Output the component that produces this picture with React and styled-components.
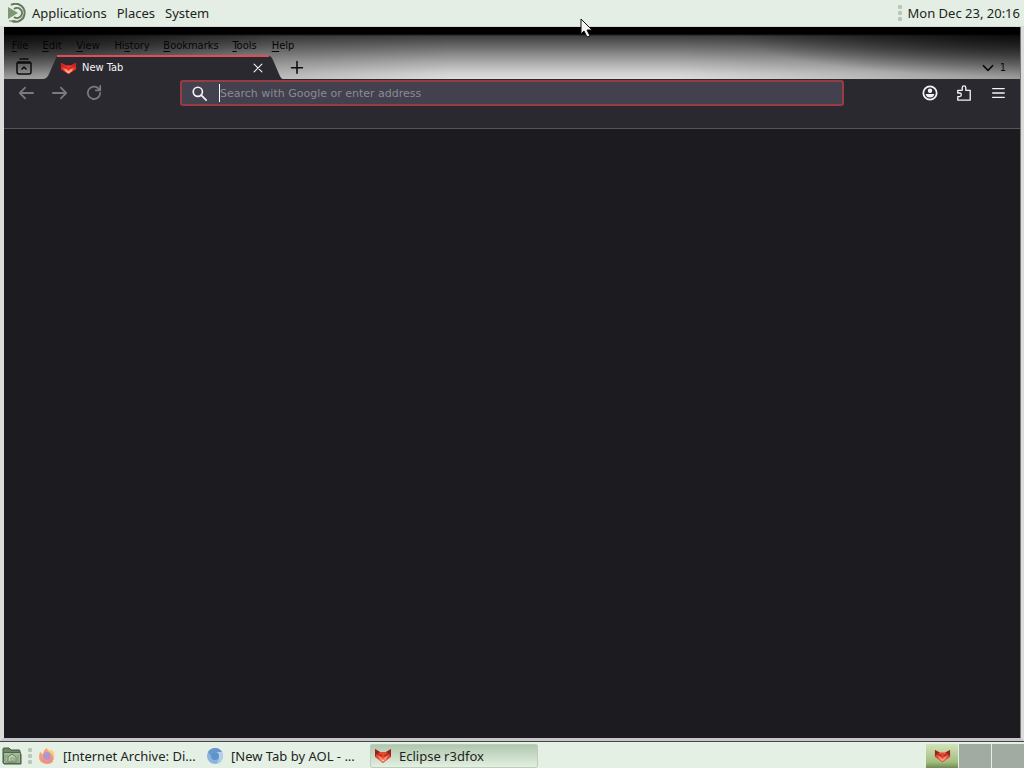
import React from "react";
import styled, { createGlobalStyle } from "styled-components";

const GlobalStyle = createGlobalStyle`
  *, *::before, *::after { box-sizing: border-box; }
  body { margin: 0; background: #e4eee4; overflow: hidden; }
  button, input { font: inherit; color: inherit; margin: 0; }
  svg { display: block; flex: none; }
`;

const Desktop = styled.div`
  display: flex;
  flex-direction: column;
  height: 100vh;
  font-family: "Noto Sans", sans-serif;
  font-size: 13px;
  line-height: 18px;
  color: #1c241c;
`;

const PlainButton = styled.button`
  display: flex;
  align-items: center;
  border: 0;
  padding: 0;
  background: none;
  white-space: nowrap;
`;

const TopPanel = styled.header`
  display: flex;
  flex: none;
  align-items: center;
  height: 27px;
  padding: 0 4px 0 8px;
  background: #e4eee4;
  border-bottom: 1px solid #d3dbd3;
`;

const PanelMenu = styled.nav`
  display: flex;
  flex: 1;
  gap: 10px;
`;

const PanelButton = styled(PlainButton)`
  gap: 4px;
`;

const Grip = styled.span`
  display: flex;
  flex: none;
  flex-direction: column;
  gap: 2px;
  width: 4px;
  margin: ${(p) => p.$margin};
  &::before, &::after, i {
    content: "";
    height: 4px;
    background: #b7c8ba;
    border-radius: 1px;
  }
  i { display: block; }
`;

const WindowFrame = styled.main`
  display: flex;
  flex: 1;
  min-height: 0;
  border: solid #dcdcda;
  border-width: 0 3px 3px 4px;
  border-bottom-color: #c6c6c8;
`;

const Browser = styled.section`
  display: flex;
  flex: 1;
  flex-direction: column;
  min-width: 0;
  background: #1c1b20;
  border-right: 1px solid #77777a;
  font-family: "DejaVu Sans Condensed", "DejaVu Sans", sans-serif;
  font-size: 11px;
  line-height: 14px;
`;

const Titlebar = styled.div`
  display: flex;
  flex: none;
  flex-direction: column;
  height: 52px;
  padding-top: 10px;
  background:
    radial-gradient(ellipse 280px 44px at 0 6px, rgba(0, 0, 0, 0.75), rgba(0, 0, 0, 0.4) 50%, transparent),
    radial-gradient(ellipse 280px 44px at 100% 6px, rgba(0, 0, 0, 0.75), rgba(0, 0, 0, 0.4) 50%, transparent),
    linear-gradient(90deg, rgba(0, 0, 0, 0.3), rgba(0, 0, 0, 0.16) 25%, transparent 44%, transparent 66%, rgba(0, 0, 0, 0.12) 82%, rgba(0, 0, 0, 0.3)),
    linear-gradient(#000 0, #000 7px, #404040 9px, #747474 22px, #a6a6a6 34px, #d2d0d1 46px, #dedcdd);
`;

const MenuBar = styled.nav`
  display: flex;
  flex: none;
  height: 18px;
  color: #050505;
`;

const MenuItem = styled(PlainButton)`
  justify-content: center;
  width: ${(p) => p.$width}px;
  u { text-underline-offset: 2px; }
`;

const TabStrip = styled.div`
  display: flex;
  flex: 1;
  align-items: stretch;
  color: #0c0c0e;
`;

const StripButton = styled(PlainButton)`
  justify-content: center;
  width: ${(p) => p.$width}px;
`;

const ListTabs = styled(PlainButton)`
  gap: 5px;
  margin-left: auto;
  padding: 2px 14px 0 0;
`;

const Tab = styled.div`
  display: flex;
  align-items: center;
  position: relative;
  width: 240px;
  padding: 2px 20px 0 17px;
  color: #f4f4f6;
`;

const TabShape = styled.svg`
  position: absolute;
  inset: 0;
  width: 100%;
  height: 100%;
`;

const TabLabel = styled.span`
  position: relative;
  flex: 1;
  margin-left: 5px;
`;

const TabIcon = styled.span`
  position: relative;
`;

const CloseButton = styled(PlainButton)`
  position: relative;
`;

const Toolbar = styled.div`
  display: flex;
  flex: none;
  align-items: flex-start;
  height: 28px;
  padding: 1px 14px 0;
  background: #2a2930;
`;

const ToolGroup = styled.div`
  display: flex;
  flex: 1;
  align-items: center;
  gap: 18px;
  height: 26px;
  justify-content: ${(p) => (p.$end ? "flex-end" : "flex-start")};
  color: ${(p) => (p.$end ? "#f4f3f8" : "#7a797f")};
`;

const AddressBar = styled.form`
  display: flex;
  align-items: center;
  width: 67.2%;
  height: 26px;
  padding: 0 10px;
  gap: 12px;
  color: #f4f3f8;
  background: #42414d;
  border: 2px solid #963c42;
  border-radius: 3px;
`;

const AddressInput = styled.input`
  flex: 1;
  min-width: 0;
  height: 18px;
  padding: 0;
  border: 0;
  border-left: 1px solid #fff;
  outline: 0;
  background: none;
  font-family: "DejaVu Sans", sans-serif;
  font-size: 11px;
  &::placeholder { color: #8c8a97; opacity: 1; }
`;

const BookmarkBar = styled.div`
  flex: none;
  height: 22px;
  background: #2a2930;
  border-bottom: 1px solid #56555b;
`;

const Taskbar = styled.footer`
  display: flex;
  flex: none;
  align-items: stretch;
  height: 27px;
  padding: 2px 0 0 2px;
  background: #e5f0e5;
  border-top: 1px solid #434746;
`;

const TaskList = styled.div`
  display: flex;
  flex: 1;
  min-width: 0;
`;

const Task = styled(PlainButton)`
  width: 168px;
  height: 24px;
  padding: 0 4px;
  gap: 7px;
  border-radius: 3px;
  background: ${(p) => (p.$active ? "linear-gradient(#aec5ac, #c7d9c5 45%, #e6f1e3)" : "none")};
  box-shadow: ${(p) => (p.$active ? "inset 0 0 0 1px #bccfba" : "none")};
`;

const Workspace = styled(PlainButton)`
  justify-content: center;
  width: 32px;
  margin-left: 1px;
  background: ${(p) => (p.$active ? "linear-gradient(#d2e3b7, #a3be80 75%, #6e8b50)" : "#a1aba1")};
`;

const Pointer = styled.svg`
  position: absolute;
  left: 580px;
  top: 18px;
  pointer-events: none;
`;

const MateLogo = () => (
  <svg width="20" height="20" viewBox="0 0 20 20" fill="none" stroke="#66785d" strokeWidth="2">
    <path d="M0 4 10 10 0 16Z" fill="#7d976f" stroke="none" />
    <path d="M3 2A9 9 0 1 1 4 18M6 6A5 5 0 1 1 6 14" />
    <path d="M1 18h7" strokeWidth="1" />
  </svg>
);

const FolderIcon = () => (
  <svg width="20" height="20" viewBox="0 0 20 20">
    <path d="M1 17V3q0-1 1-1h5l2 2h8q1 0 1 1v3h1v10H2Z" fill="#6c8763" stroke="#405640" />
    <path d="M1.5 6.5h17v11h-17z" fill="#a4b99a" stroke="#4d684a" />
    <path d="m6 11 4-3 4 3v5H6Z" fill="#c1d0b8" stroke="#637e59" />
    <path d="M9 12h3v3H9zM3 9v6m2-6v2m11-2v6M3 16h14" fill="none" stroke="#7e9873" />
  </svg>
);

const FoxIcon = ({ width = 18, height = 16, soft = false }) => (
  <svg width={width} height={height} viewBox="0 0 18 16" preserveAspectRatio="none">
    <path d="M1 1 6 4h6l5-3v8l-8 6-8-6Z" fill={soft ? "#f5322a" : "#e5482f"} />
    <path d="m1 1 5 3-4 3-1 2Zm16 0-5 3 4 3 1 2Z" fill={soft ? "#c92426" : "#8f2620"} />
    <path d="m4 8 3 1 2 2 2-2 3-1-2 4-3 2-3-2Z" fill={soft ? "#ff9c80" : "#f58b70"} />
    <path d="m4 6 4 2m6-2-4 2" fill="none" stroke={soft ? "#b92325" : "#8c2822"} />
    <path d="m8 12 1 1 1-1" fill="none" stroke="#ffd1bf" />
  </svg>
);

const FirefoxIcon = () => (
  <svg width="18" height="18" viewBox="0 0 18 18">
    <path d="M2 5q2 1 3 3 0-5 4-7 0 3 4 4l2-1q3 8-2 11-6 4-11-1-2-4 0-9Z" fill="#f3a374" />
    <path d="M10 2q0 3 4 5 2 4 0 7 5-6 0-11-1 1-4-1Z" fill="#f7d37f" />
    <circle cx="9" cy="9" r="4" fill="#b595cd" />
    <path d="M2 9q2 5 8 4 4-1 5-5 2 9-6 9-6-1-7-8" fill="#ee908d" />
  </svg>
);

const ChromiumIcon = () => (
  <svg width="18" height="18" viewBox="0 0 18 18">
    <circle cx="9" cy="9" r="8" fill="#8cb4dd" />
    <path d="M9 1a8 8 0 0 1 7 4H9a4 4 0 0 0-4 4L2 5q3-4 7-4Z" fill="#6997cd" />
    <path d="M16 5q3 8-5 12l2-5q1-4-4-7Z" fill="#b4d0eb" />
    <circle cx="9" cy="9" r="4" fill="#5f92cf" />
  </svg>
);

const Icon = ({ size = 18, stroke = 1.5, children }) => (
  <svg
    width={size}
    height={size}
    viewBox="0 0 18 18"
    fill="none"
    stroke="currentColor"
    strokeWidth={stroke}
    strokeLinecap="round"
    strokeLinejoin="round"
    aria-hidden="true"
  >
    {children}
  </svg>
);

const menus = [
  { name: "File", key: 0, width: 32 },
  { name: "Edit", key: 0, width: 32 },
  { name: "View", key: 0, width: 40 },
  { name: "History", key: 2, width: 48 },
  { name: "Bookmarks", key: 0, width: 70 },
  { name: "Tools", key: 0, width: 37 },
  { name: "Help", key: 0, width: 40 },
];

export default function App() {
  return (
    <Desktop>
      <GlobalStyle />
      <TopPanel>
        <PanelMenu>
          <PanelButton><MateLogo />Applications</PanelButton>
          <PanelButton>Places</PanelButton>
          <PanelButton>System</PanelButton>
        </PanelMenu>
        <Grip $margin="0 6px 0 0"><i /></Grip>
        <time>Mon Dec 23, 20:16</time>
      </TopPanel>

      <WindowFrame>
        <Browser>
          <Titlebar>
            <MenuBar>
              {menus.map(({ name, key, width }) => (
                <MenuItem key={name} $width={width}>
                  <span>{name.slice(0, key)}<u>{name[key]}</u>{name.slice(key + 1)}</span>
                </MenuItem>
              ))}
            </MenuBar>
            <TabStrip>
              <StripButton $width={39} aria-label="Firefox View">
                <Icon><path d="M5 1h8M2 5h14v9q0 2-2 2H4q-2 0-2-2V5Zm5 6 2-2 2 2M3 4h12" /></Icon>
              </StripButton>
              <Tab>
                <TabShape viewBox="0 0 240 24" preserveAspectRatio="none">
                  <path d="M0 24q4 0 6-5L13 3q1-3 5-3h205q5 0 7 5l6 14q2 5 4 5Z" fill="#2a2930" />
                  <path d="M14 1h212" stroke="#df4d57" strokeWidth="2" />
                </TabShape>
                <TabIcon><FoxIcon width={17} height={13} soft /></TabIcon>
                <TabLabel>New Tab</TabLabel>
                <CloseButton aria-label="Close tab">
                  <Icon size={10} stroke={2}><path d="m2 2 14 14m0-14L2 16" /></Icon>
                </CloseButton>
              </Tab>
              <StripButton $width={28} aria-label="New tab">
                <Icon size={14} stroke={2}><path d="M9 2v15M2 10h14" /></Icon>
              </StripButton>
              <ListTabs aria-label="List all tabs">
                <Icon size={14} stroke={2}><path d="m3 6 6 6 6-6" /></Icon>
                1
              </ListTabs>
            </TabStrip>
          </Titlebar>

          <Toolbar>
            <ToolGroup>
              <PlainButton aria-label="Back"><Icon size={16} stroke={2}><path d="M17 9H2m6-6L2 9l6 6" /></Icon></PlainButton>
              <PlainButton aria-label="Forward"><Icon size={16} stroke={2}><path d="M1 9h15m-6-6 6 6-6 6" /></Icon></PlainButton>
              <PlainButton aria-label="Reload"><Icon size={16} stroke={2}><path d="M16 9a7 7 0 1 1-3-6l3 3M16 1v5h-5" /></Icon></PlainButton>
            </ToolGroup>
            <AddressBar onSubmit={(e) => e.preventDefault()}>
              <Icon size={15} stroke={2}><circle cx="7" cy="7" r="5.5" /><path d="m11 11 6 6" /></Icon>
              <AddressInput aria-label="Address" placeholder="Search with Google or enter address" />
            </AddressBar>
            <ToolGroup $end>
              <PlainButton aria-label="Account">
                <Icon size={16} stroke={2}>
                  <circle cx="9" cy="9" r="7.5" />
                  <circle cx="9" cy="6.5" r="2.5" fill="currentColor" stroke="none" />
                  <path d="M4 10h10q-1 4-5 4t-5-4Z" fill="currentColor" stroke="none" />
                </Icon>
              </PlainButton>
              <PlainButton aria-label="Extensions">
                <Icon size={16}><path d="M2 9V6h5V3a2 2 0 0 1 4 0v3h5v11H2v-4h2a2 2 0 0 0 0-4H2Z" /></Icon>
              </PlainButton>
              <PlainButton aria-label="Open application menu">
                <Icon size={16}><path d="M3 4h13M3 9h13M3 14h13" /></Icon>
              </PlainButton>
            </ToolGroup>
          </Toolbar>
          <BookmarkBar />
        </Browser>
      </WindowFrame>

      <Taskbar>
        <PlainButton aria-label="Show home folder"><FolderIcon /></PlainButton>
        <Grip $margin="4px 2px 4px 6px"><i /></Grip>
        <TaskList>
          <Task><FirefoxIcon />[Internet Archive: Di...</Task>
          <Task><ChromiumIcon />[New Tab by AOL - ...</Task>
          <Task $active><FoxIcon />Eclipse r3dfox</Task>
        </TaskList>
        <Workspace $active aria-label="Workspace 1"><FoxIcon width={17} height={14} /></Workspace>
        <Workspace aria-label="Workspace 2" />
        <Workspace aria-label="Workspace 3" />
      </Taskbar>

      <Pointer width="14" height="20" viewBox="0 0 14 20" aria-hidden="true">
        <path d="M1 1v15l3-3 3 6 3-1-3-6h5Z" fill="#f5f5f5" stroke="#111" />
      </Pointer>
    </Desktop>
  );
}
